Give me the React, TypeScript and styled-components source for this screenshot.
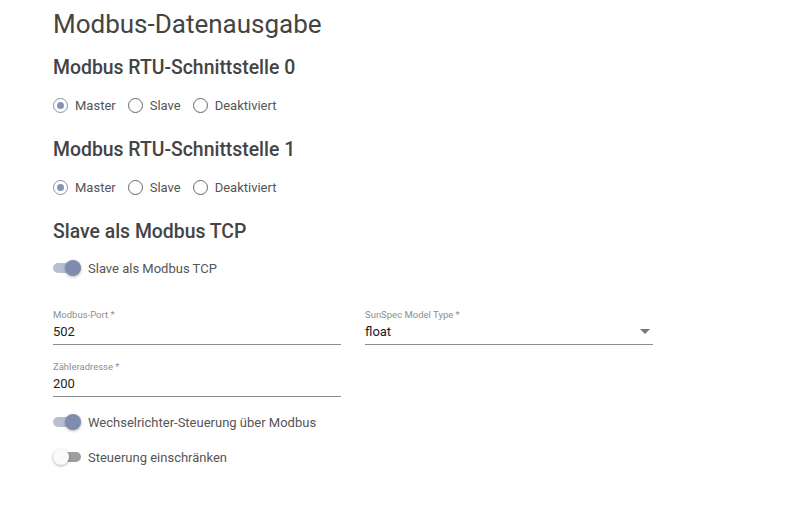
import React from "react";
import styled, { createGlobalStyle } from "styled-components";

const GlobalStyle = createGlobalStyle`
  body {
    margin: 0;
    background: #fff;
    font-family: Roboto, "Noto Sans", sans-serif;
    color: #444;
  }
`;

const Page = styled.div`
  padding: 8px 53px 0 53px;
  display: flex;
  flex-direction: column;
`;

const Title = styled.h1`
  margin: 0;
  font-size: 26px;
  line-height: 33px;
  font-weight: 400;
  color: #444;
`;

const Heading = styled.h2<{ $top: number }>`
  margin: ${(p) => p.$top}px 0 0 0;
  font-size: 19.4px;
  line-height: 24px;
  font-weight: 500;
  color: #444;
`;

const RadioRow = styled.div`
  margin-top: 13px;
  height: 24px;
  display: flex;
  align-items: center;
`;

const RadioItem = styled.label`
  display: flex;
  align-items: center;
  margin-right: 12px;
  font-size: 13px;
  color: #555;
`;

const RadioCircle = styled.span<{ $checked?: boolean }>`
  box-sizing: border-box;
  width: 15px;
  height: 15px;
  border-radius: 50%;
  border: 1px solid ${(p) => (p.$checked ? "#8592b1" : "#666")};
  margin-right: 7px;
  display: flex;
  align-items: center;
  justify-content: center;

  &::after {
    content: "";
    display: ${(p) => (p.$checked ? "block" : "none")};
    width: 7px;
    height: 7px;
    border-radius: 50%;
    background: #8592b1;
  }
`;

const SwitchRow = styled.div<{ $top: number }>`
  margin-top: ${(p) => p.$top}px;
  height: 24px;
  display: flex;
  align-items: center;
  font-size: 13px;
  color: #555;
`;

const Track = styled.span<{ $on?: boolean }>`
  position: relative;
  width: 28px;
  height: 10px;
  border-radius: 5px;
  background: ${(p) => (p.$on ? "#b7bfd1" : "#9e9e9e")};
  margin-right: 7px;
`;

const Thumb = styled.span<{ $on?: boolean }>`
  position: absolute;
  top: -3px;
  left: ${(p) => (p.$on ? "12px" : "0")};
  width: 16px;
  height: 16px;
  border-radius: 50%;
  background: ${(p) => (p.$on ? "#7f8cad" : "#fafafa")};
  box-shadow: 0 1px 3px rgba(0, 0, 0, 0.3);
`;

const FieldGrid = styled.div`
  margin-top: 29px;
  display: grid;
  grid-template-columns: 288px 288px;
  column-gap: 24px;
  row-gap: 16px;
`;

const Field = styled.div`
  display: flex;
  flex-direction: column;
`;

const FieldLabel = styled.span`
  font-size: 9.5px;
  line-height: 12px;
  color: #8e8e8e;
`;

const FieldValue = styled.div`
  margin-top: 3px;
  height: 20px;
  font-size: 13px;
  line-height: 16px;
  color: #222;
  border-bottom: 1px solid #8e8e8e;
  display: flex;
  justify-content: space-between;
`;

const Arrow = styled.span`
  margin: 5px 3px 0 0;
  width: 0;
  height: 0;
  border-left: 5px solid transparent;
  border-right: 5px solid transparent;
  border-top: 5px solid #777;
`;

const Radio = ({ label, checked }: { label: string; checked?: boolean }) => (
  <RadioItem>
    <RadioCircle $checked={checked} />
    {label}
  </RadioItem>
);

const Toggle = ({ label, on, top }: { label: string; on?: boolean; top: number }) => (
  <SwitchRow $top={top}>
    <Track $on={on}>
      <Thumb $on={on} />
    </Track>
    {label}
  </SwitchRow>
);

const modes = ["Master", "Slave", "Deaktiviert"];

export default function App() {
  return (
    <>
      <GlobalStyle />
      <Page>
        <Title>Modbus-Datenausgabe</Title>
        <Heading $top={15}>Modbus RTU-Schnittstelle 0</Heading>
        <RadioRow>
          {modes.map((m, i) => (
            <Radio key={m} label={m} checked={i === 0} />
          ))}
        </RadioRow>
        <Heading $top={21}>Modbus RTU-Schnittstelle 1</Heading>
        <RadioRow>
          {modes.map((m, i) => (
            <Radio key={m} label={m} checked={i === 0} />
          ))}
        </RadioRow>
        <Heading $top={21}>Slave als Modbus TCP</Heading>
        <Toggle label="Slave als Modbus TCP" on top={12} />
        <FieldGrid>
          <Field>
            <FieldLabel>Modbus-Port *</FieldLabel>
            <FieldValue>502</FieldValue>
          </Field>
          <Field>
            <FieldLabel>SunSpec Model Type *</FieldLabel>
            <FieldValue>
              float
              <Arrow />
            </FieldValue>
          </Field>
          <Field>
            <FieldLabel>Zähleradresse *</FieldLabel>
            <FieldValue>200</FieldValue>
          </Field>
        </FieldGrid>
        <Toggle label="Wechselrichter-Steuerung über Modbus" on top={13} />
        <Toggle label="Steuerung einschränken" top={11} />
      </Page>
    </>
  );
}
